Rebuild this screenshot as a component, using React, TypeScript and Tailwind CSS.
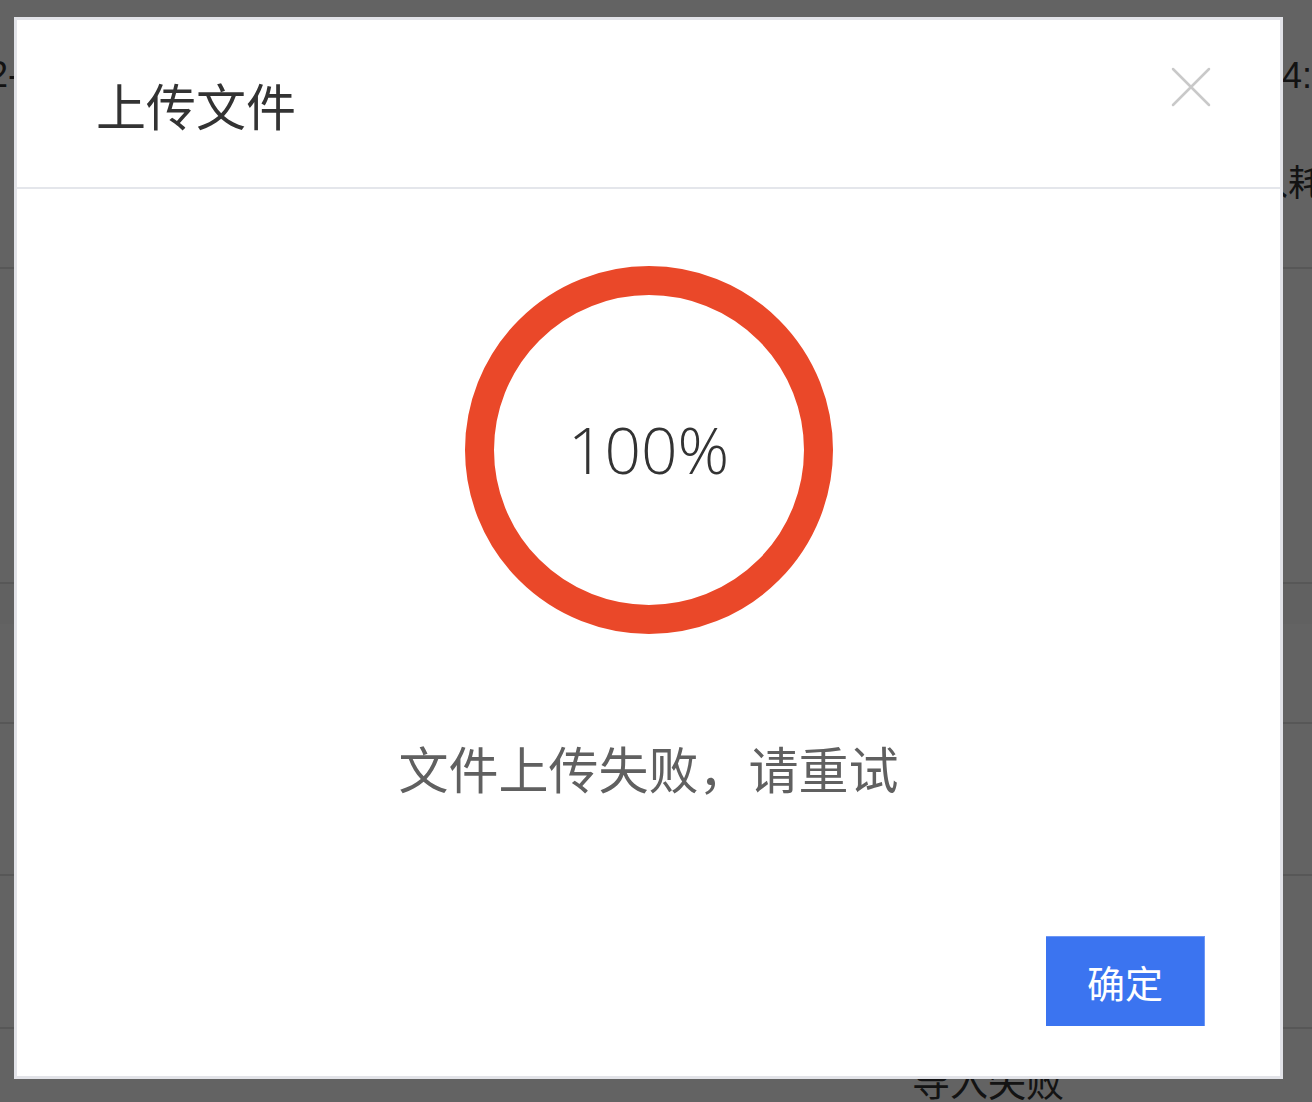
const cjk = "font-['Noto_Sans_CJK_SC',sans-serif]";

function BackgroundPage() {
  return (
    <div className={`flex h-full w-full flex-col bg-white text-[36px] leading-none text-[#333] ${cjk}`}>
      <div className="flex h-[269px] shrink-0 items-start border-b-2 border-[#e1e1e1]">
        <span className="-ml-[72px] mt-[57px] whitespace-nowrap font-['Liberation_Sans',sans-serif]">
          2022-
        </span>
        <div className="flex-1" />
        <div className="flex w-[59px] shrink-0 flex-col items-start whitespace-nowrap">
          <span className="ml-[9px] mt-[58px] font-['Liberation_Sans',sans-serif]">14:30</span>
          <span className="-ml-[37px] mt-[68px]">导入耗时</span>
        </div>
      </div>
      <div className="h-[315px] shrink-0 border-b-2 border-[#e1e1e1]" />
      <div className="h-[40px] shrink-0 bg-[#fafafa]" />
      <div className="h-[100px] shrink-0 border-b-2 border-[#e1e1e1]" />
      <div className="h-[152px] shrink-0 border-b-2 border-[#e1e1e1]" />
      <div className="h-[153px] shrink-0 border-b-2 border-[#e1e1e1]" />
      <div className="flex flex-1 items-start">
        <span className="ml-[912px] mt-[32px] text-[38px]">导入失败</span>
      </div>
    </div>
  );
}

function ProgressRing({ percent }: { percent: number }) {
  return (
    <div className="relative h-[368px] w-[368px]">
      <svg viewBox="0 0 368 368" className="h-full w-full">
        <circle cx="184" cy="184" r="169.5" fill="none" stroke="#ea4829" strokeWidth="29" />
      </svg>
      <div className="absolute inset-0 flex items-center justify-center">
        <span className="text-[64px] font-light leading-none text-[#333] font-['Open_Sans',sans-serif]">
          {percent}%
        </span>
      </div>
    </div>
  );
}

export default function App() {
  return (
    <div className="relative h-[1102px] w-[1312px] overflow-hidden">
      <BackgroundPage />
      <div className="absolute inset-0 bg-black/[0.61]" />

      <div
        className={`absolute left-[14px] top-[17px] flex h-[1062px] w-[1269px] flex-col border-[3px] border-[#e2e3e8] bg-white ${cjk}`}
      >
        <div className="flex h-[169px] shrink-0 items-center justify-between border-b-2 border-[#e4e6eb] pl-[79px] pr-[69px]">
          <h1 className="text-[50px] font-normal leading-none text-[#333]">上传文件</h1>
          <button aria-label="关闭" className="-mt-[34px] h-[40px] w-[40px] text-[#c9c9c9]">
            <svg viewBox="0 0 40 40" className="h-full w-full">
              <path d="M2 2L38 38M38 2L2 38" stroke="currentColor" strokeWidth="2.5" strokeLinecap="round" />
            </svg>
          </button>
        </div>

        <div className="flex flex-col items-center pt-[77px]">
          <ProgressRing percent={100} />
          <p className="mt-[108px] text-[50px] leading-[50px] text-[#606060]">文件上传失败，请重试</p>
        </div>

        <div className="mt-auto flex justify-end pb-[50px] pr-[75px]">
          <button className="h-[90px] w-[159px] border-r border-t border-[#6d97f5] bg-[#3b74f0] text-[38px] leading-none text-white">
            确定
          </button>
        </div>
      </div>
    </div>
  );
}
